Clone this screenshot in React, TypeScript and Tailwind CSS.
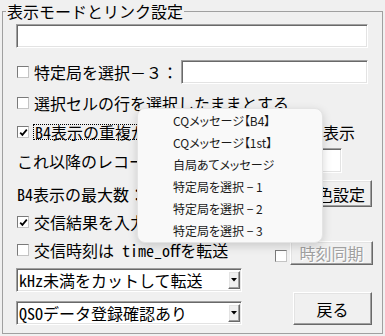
import React from "react"

const sunken =
  "border border-t-[#a0a0a0] border-l-[#a0a0a0] border-r-white border-b-white shadow-[inset_1px_1px_0_#696969,inset_-1px_-1px_0_#e3e3e3] bg-white"
const raised =
  "border border-t-white border-l-white border-r-[#696969] border-b-[#696969] shadow-[inset_-1px_-1px_0_#a0a0a0,inset_1px_1px_0_#e3e3e3] bg-[#f0f0f0]"

// half-width latin, like the bitmap UI font in the dialog
function H({ children }: { children: React.ReactNode }) {
  return <span className="[font-feature-settings:'hwid']">{children}</span>
}

function Box({ checked = false, className = "" }: { checked?: boolean; className?: string }) {
  return (
    <span
      className={`w-[12px] h-[12px] shrink-0 flex items-center justify-center bg-white border border-t-[#7a7a7a] border-l-[#7a7a7a] border-r-[#c4c4c4] border-b-[#c4c4c4] ${className}`}
    >
      {checked && (
        <svg width="9" height="9" viewBox="0 0 9 9">
          <polyline points="1.2,4.6 3.4,6.9 7.8,1.6" fill="none" stroke="#000" strokeWidth="1.7" />
        </svg>
      )}
    </span>
  )
}

function Combo({ children }: { children: React.ReactNode }) {
  return (
    <div className={`${sunken} h-[24px] w-[226px] flex items-center`}>
      <span className="flex-1 pl-[2px] leading-[18px] whitespace-nowrap">{children}</span>
      <span className={`${raised} w-[12px] h-[18px] mr-[1px] flex items-center justify-center`}>
        <svg width="6" height="4" viewBox="0 0 6 4">
          <polygon points="0,0 6,0 3,3.5" fill="#000" />
        </svg>
      </span>
    </div>
  )
}

const menuItems = [
  "CQメッセージ【B4】",
  "CQメッセージ【1st】",
  "自局あてメッセージ",
  "特定局を選択 − 1",
  "特定局を選択 − 2",
  "特定局を選択 − 3",
]

export default function App() {
  return (
    <div className="relative w-[385px] h-[336px] overflow-hidden bg-[#f0f0f0] text-black text-[16px] leading-[18px] font-['Noto_Sans_CJK_JP',sans-serif]">
      <fieldset className="ml-[2px] mt-[2px] w-[381px] h-[332px] border border-[#a0a0a0]">
        <legend className="ml-[3px] px-[1px] leading-[18px]">表示モードとリンク設定</legend>

        <div className="flex flex-col pl-[13px] pr-[10px]">
          <div className={`${sunken} mt-[4px] w-[352px] h-[24px]`} />

          <div className="mt-[12px] h-[24px] flex items-center">
            <Box className="ml-[1px]" />
            <span className="ml-[5px] whitespace-nowrap">特定局を選択－３：</span>
            <div className={`${sunken} ml-auto mr-[4px] w-[187px] h-[24px]`} />
          </div>

          <div className="mt-[8px] h-[21px] flex items-center">
            <Box className="ml-[1px]" />
            <span className="ml-[5px] whitespace-nowrap">選択セルの行を選択したままとする</span>
          </div>

          <div className="mt-[9px] h-[20px] flex items-center">
            <Box checked className="ml-[1px]" />
            <span className="ml-[4px] px-[1px] border border-dotted border-black leading-[14px] whitespace-nowrap">
              <H>B4</H>表示の重複が
            </span>
            <span className="ml-auto mr-[17px] whitespace-nowrap">表示</span>
          </div>

          <div className="mt-[6px] h-[25px] flex items-center">
            <span className="ml-[1px] whitespace-nowrap">これ以降のレコード</span>
            <div className={`${sunken} ml-auto mr-[30px] w-[60px] h-[25px]`} />
          </div>

          <div className="mt-[7px] h-[27px] flex items-center">
            <span className="ml-[1px] whitespace-nowrap">
              <H>B4</H>表示の最大数：
            </span>
            <div className={`${raised} ml-auto w-[62px] h-[27px] flex items-center justify-center whitespace-nowrap`}>
              色設定
            </div>
          </div>

          <div className="mt-[5px] h-[20px] flex items-center">
            <Box checked className="ml-[1px]" />
            <span className="ml-[5px] whitespace-nowrap">交信結果を入力</span>
          </div>

          <div className="mt-[9px] h-[24px] flex items-start">
            <div className="h-[18px] flex items-center">
              <Box className="ml-[1px]" />
              <span className="ml-[5px] whitespace-nowrap">
                交信時刻は<H> time_off</H>を転送
              </span>
            </div>
            <div className="ml-auto mr-[-1px] flex items-start">
              <Box className="mt-[9px]" />
              <div
                className={`${raised} ml-[3px] w-[83px] h-[24px] flex items-center justify-center text-[#a0a0a0] [text-shadow:1px_1px_0_#fff] whitespace-nowrap`}
              >
                時刻同期
              </div>
            </div>
          </div>

          <div className="mt-[3px] flex">
            <div className="flex flex-col gap-[9px]">
              <Combo>
                <H>kHz</H>未満をカットして転送
              </Combo>
              <Combo>
                <H>QSO</H>データ登録確認あり
              </Combo>
            </div>
            <div className={`${raised} ml-auto self-end w-[79px] h-[33px] flex items-center justify-center`}>
              戻る
            </div>
          </div>
        </div>
      </fieldset>

      {/* context menu over the dialog */}
      <div className="absolute left-[137px] top-[108px] w-[186px] h-[135px] rounded-[8px] bg-[#f9f9f9] border border-[#e4e4e4] shadow-[0_3px_10px_rgba(0,0,0,0.16)] pt-[1px] text-[12px] text-[#1a1a1a] [font-feature-settings:'palt']">
        {menuItems.map((item) => (
          <div key={item} className="h-[22px] pl-[35px] flex items-center whitespace-nowrap">
            {item}
          </div>
        ))}
      </div>
    </div>
  )
}
